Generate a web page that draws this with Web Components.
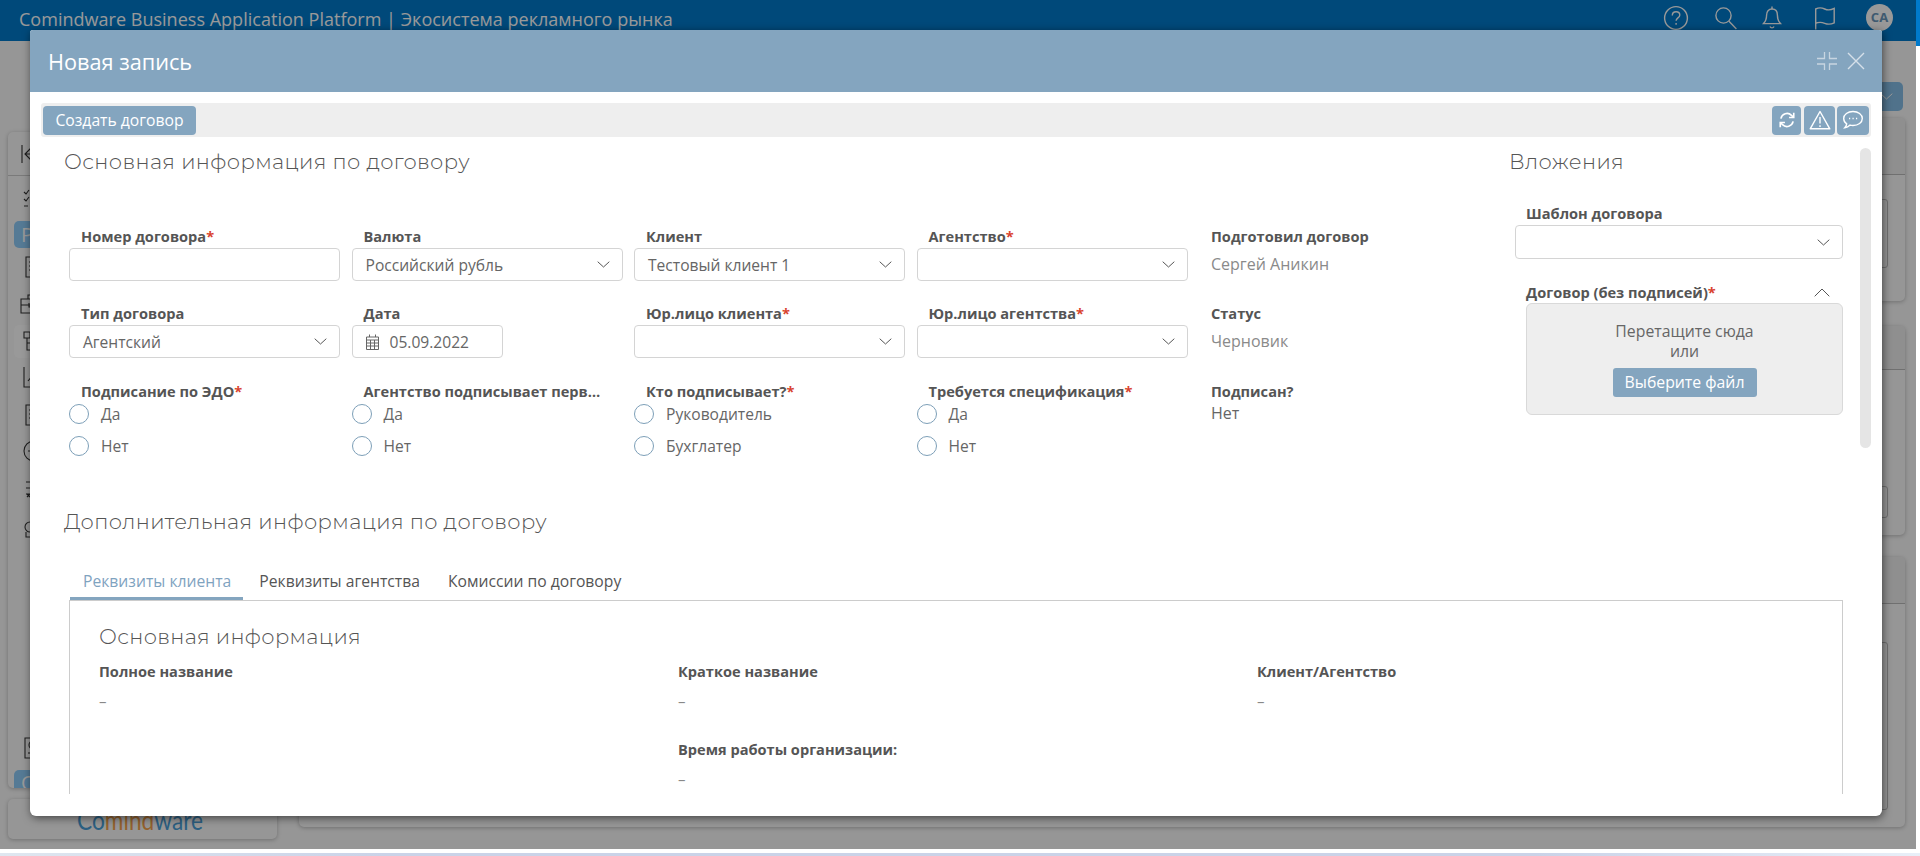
<!DOCTYPE html>
<html lang="ru"><head><meta charset="utf-8"><title>Новая запись</title>
<style>
html,body{margin:0;padding:0;height:856px;overflow:hidden;background:#fff;font-family:"Open Sans","Noto Sans",sans-serif}
</style></head>
<body>
<cmw-page></cmw-page>
<script>
const CHEV='<svg width="13" height="7" viewBox="0 0 13 7" fill="none" stroke="#555" stroke-width="1"><path d="M.7.7 6.5 6 12.3.7"/></svg>';
const ICONS={
 help:'<svg width="26" height="26" viewBox="0 0 26 26" fill="none" stroke="currentColor" stroke-width="1.4"><circle cx="13" cy="13" r="11.4"/><path d="M9.3 10.4c0-2.2 1.6-3.6 3.8-3.6s3.7 1.3 3.7 3.2c0 2.9-3.7 2.9-3.7 5.7"/><path d="M13.1 18v1.8"/></svg>',
 search:'<svg width="24" height="24" viewBox="0 0 24 24" fill="none" stroke="currentColor" stroke-width="1.4"><circle cx="9.5" cy="9.5" r="7.6"/><path d="m15 15.3 7.4 7.6"/></svg>',
 bell:'<svg width="20" height="24" viewBox="0 0 20 24" fill="none" stroke="currentColor" stroke-width="1.4"><path d="M10 3C6.5 3 4.6 5.6 4.6 9c0 4.6-1 6.4-3.1 8.6h17c-2.100-2.200-3.100-4-3.100-8.600C15.400 5.600 13.500 3 10 3Z"/><path d="M10 .6V3M8 20.500c.6 1.800 3.400 1.800 4 0"/></svg>',
 flag:'<svg width="22" height="24" viewBox="0 0 22 24" fill="none" stroke="currentColor" stroke-width="1.4"><path d="M1.700 23.500V3c3-1.500 6-1.400 9 0s6.500 1 9.500-.6v14.400c-3 1.500-6.300 1.800-9.500.5s-6.300-1.300-9.500.2"/></svg>',
 refresh:'<svg width="18" height="18" viewBox="0 0 20 20" fill="none" stroke="#fff" stroke-width="1.800"><path d="M3.200 8.400A7 7 0 0 1 15 4.800l2 2"/><path d="M17.500 2v5.200h-5.200"/><path d="M16.800 11.600A7 7 0 0 1 5 15.200l-2-2"/><path d="M2.500 18v-5.200h5.200"/></svg>',
 warn:'<svg width="22" height="20" viewBox="0 0 22 20" fill="none" stroke="#fff" stroke-width="1.400"><path d="M11 1.500 20.800 18.800H1.200Z" stroke-linejoin="round"/><path d="M11 7v6.500M11 15.300V17"/></svg>',
 chat:'<svg width="22" height="20" viewBox="0 0 22 20" fill="none" stroke="#fff" stroke-width="1.400"><path d="M11 1.500c5.200 0 9.300 3 9.300 7s-4.100 7-9.300 7c-1 0-2-.1-2.900-.4-1.300 1.300-3 2.400-5.300 2.600 1-1 1.700-2.200 1.900-3.800C2.800 12.700 1.700 10.700 1.700 8.500c0-4 4.100-7 9.300-7Z"/><path d="M7 8.500h1.200M10.500 8.500h1.200M14 8.500h1.200" stroke-width="1.600"/></svg>',
 cal:'<svg width="15" height="16" viewBox="0 0 15 16" fill="none" stroke="#666" stroke-width="1"><path d="M1.500 3h12v12.500h-12zM1.500 6h12M1.500 9h12M1.500 12h12M5.500 6v9.500M9.500 6v9.500M4.500 .5V3M10.500 .5V3"/></svg>',
 shrink:'<svg width="20" height="18" viewBox="0 0 20 18" fill="none" stroke="#c7d5e1" stroke-width="1.300"><path d="M0 6.500h7.500V0M20 6.500h-7.500V0M0 12h7.500v6M20 12h-7.500v6"/></svg>',
 close:'<svg width="18" height="18" viewBox="0 0 18 18" fill="none" stroke="#d5e0e9" stroke-width="1.400"><path d="m1 1 16 16M17 1 1 17"/></svg>',
 s1:'<svg width="20" height="20" viewBox="0 0 20 20" fill="none" stroke="#333" stroke-width="1.100"><path d="m1 3 2 2 3-4M1 10l2 2 3-4M1 17h4M9 4h10M9 11h10M9 17h10"/></svg>',
 s2:'<svg width="20" height="22" viewBox="0 0 20 22" fill="none" stroke="#333" stroke-width="1.100"><path d="M4 1h14v20H4zM7 6h8M7 10h8M7 14h8"/></svg>',
 s3:'<svg width="24" height="20" viewBox="0 0 24 20" fill="none" stroke="#333" stroke-width="1.100"><path d="M1 5h22v14H1zM8 5V1h8v4M1 11h22M9 9v4h3V9"/></svg>',
 s4:'<svg width="22" height="22" viewBox="0 0 22 22" fill="none" stroke="#333" stroke-width="1.100"><path d="M1 1h6v6H1zM4 7v12h8M4 12h8"/></svg>',
 s5:'<svg width="22" height="22" viewBox="0 0 22 22" fill="none" stroke="#333" stroke-width="1.100"><path d="M1 1v20h20M5 15l5-6 4 3 6-7"/></svg>',
 s6:'<svg width="22" height="22" viewBox="0 0 22 22" fill="none" stroke="#333" stroke-width="1.100"><circle cx="11" cy="11" r="10"/><path d="M11 5v12M5 11h12"/></svg>',
 s7:'<svg width="20" height="20" viewBox="0 0 20 20" fill="none" stroke="#333" stroke-width="1.100"><path d="M1 2h18M1 8h18M1 14h5M2 17l3-3M2 14l3 3"/></svg>',
 s8:'<svg width="22" height="22" viewBox="0 0 22 22" fill="none" stroke="#333" stroke-width="1.100"><circle cx="6" cy="11" r="5"/><circle cx="11" cy="5" r="4"/><path d="M2 16v5h6v-5"/></svg>',
 s9:'<svg width="20" height="22" viewBox="0 0 20 22" fill="none" stroke="#333" stroke-width="1.100"><path d="M1 1h18v20H1z"/><circle cx="9" cy="8" r="4"/><path d="M4 16h10"/></svg>'
};
function def(name,css,render){
 customElements.define(name,class extends HTMLElement{
  connectedCallback(){
   if(this.shadowRoot)return;
   const r=this.attachShadow({mode:'open'});
   r.innerHTML='<style>'+css+'</style>'+render(this);
  }
 });
}
const a=(e,n,d='')=>e.getAttribute(n)??d;

def('cmw-icon',':host{display:inline-flex;line-height:0}',e=>ICONS[a(e,'name')]);

def('cmw-topbar',`:host{display:flex;align-items:center;height:41px;background:#007acc;color:#fff;padding:0 0 0 19px;box-sizing:border-box;flex:none}
.t{font:18px/38px "Open Sans",sans-serif;flex:1;white-space:pre;margin-top:-3px;letter-spacing:.02px}
.r{display:flex;align-items:center;margin-top:-6px}
.av{width:27px;height:27px;border-radius:50%;background:#fff;color:#6996bb;font:700 13px/27px "Open Sans",sans-serif;text-align:center;margin-left:30px;margin-right:23px}
cmw-icon{margin-left:25px}`,
()=>`<div class="t">Comindware Business Application Platform | Экосистема рекламного рынка</div>
<div class="r"><cmw-icon name="help"></cmw-icon><cmw-icon name="search"></cmw-icon><cmw-icon name="bell" style="margin-left:24px"></cmw-icon><cmw-icon name="flag" style="margin-left:32px"></cmw-icon><div class="av">CA</div></div>`);

def('cmw-sidebar',`:host{display:flex;flex-direction:column;width:269px;margin:91px 0 0 8px;flex:none}
.card{height:656px;background:#fafafa;border-radius:5px;box-shadow:0 1px 4px rgba(0,0,0,.25);display:flex;flex-direction:column;overflow:hidden}
.h{height:44px;border-bottom:1px solid #ccc;box-sizing:border-box;flex:none;display:flex;align-items:center;padding-left:13px;color:#333}
.it{display:flex;align-items:center;padding-left:15px;flex:none}
.a{margin:0 6px;padding-left:7px;background:#8ecbf8;border-radius:5px;color:#fff;font:20px/1 "Open Sans",sans-serif}
.hv{margin:0 6px;padding-left:9px;background:#fff;border-radius:5px}
.logo{margin-top:11px;height:40px;background:#fafafa;border-radius:5px;box-shadow:0 1px 4px rgba(0,0,0,.25);text-align:center;font:27px/42px Lato,"Open Sans",sans-serif;color:#4a9fd8;overflow:hidden;padding-right:6px}
.logo span{display:inline-block;transform:scaleX(.84)}
.logo b{font-weight:400;color:#f5a24c}`,
()=>`<div class="card"><div class="h"><svg width="20" height="20" viewBox="0 0 20 20" fill="none" stroke="#333" stroke-width="1.100"><path d="M1 1v18M18 10H4M10 4l-6 6 6 6"/></svg></div>
<div class="it" style="height:45px"><cmw-icon name="s1"></cmw-icon></div>
<div class="it a" style="height:27px">Р</div>
<div class="it" style="height:38px;padding-left:14px"><cmw-icon name="s2"></cmw-icon></div>
<div class="it" style="height:36px;padding-left:12px"><cmw-icon name="s3"></cmw-icon></div>
<div class="it hv" style="height:33px;margin-top:3px"><cmw-icon name="s4"></cmw-icon></div>
<div class="it" style="height:38px"><cmw-icon name="s5"></cmw-icon></div>
<div class="it" style="height:38px;padding-left:14px"><cmw-icon name="s2"></cmw-icon></div>
<div class="it" style="height:34px"><cmw-icon name="s6"></cmw-icon></div>
<div class="it" style="height:44px;padding-left:17px"><cmw-icon name="s7"></cmw-icon></div>
<div class="it" style="height:30px;padding-left:16px"><cmw-icon name="s8"></cmw-icon></div>
<div style="flex:1"></div>
<div class="it" style="height:36px;padding-left:16px"><cmw-icon name="s9"></cmw-icon></div>
<div class="it a" style="height:30px;margin-top:4px;margin-bottom:-12px;align-items:flex-start;padding-top:3px;box-sizing:border-box">О</div></div>
<div class="logo"><span>Co<b>mind</b>ware</span></div>`);

def('cmw-bgcard',`:host{display:block;position:relative;background:#fafafa;border-radius:5px;box-shadow:0 1px 4px rgba(0,0,0,.25);box-sizing:border-box;padding-right:17px}
.h{background:#eee;border-bottom:1px solid #bbb;box-sizing:border-box;border-radius:5px 5px 0 0;margin-right:-17px}
.f{border:1px solid #bbb;border-radius:3px;margin-left:auto;width:300px;box-sizing:border-box}`,
e=>`<div class="h" style="height:${a(e,'head')}px"></div><div class="f" style="margin-top:${a(e,'gap')}px;height:${a(e,'field')}px"></div>`);

def('cmw-main',`:host{display:flex;flex-direction:column;width:1606px;margin-left:22px;flex:none}
.b{align-self:flex-end;width:34px;height:29px;margin:41px 2px 7px 0;background:#86bfe8;border-radius:5px;display:flex;align-items:center;justify-content:center}`,
()=>`<div class="b"><svg width="13" height="7" viewBox="0 0 13 7" fill="none" stroke="#fff" stroke-width="1"><path d="M.7.7 6.500 6 12.300.7"/></svg></div>
<cmw-bgcard head="57" gap="24" field="69" style="height:183px"></cmw-bgcard>
<cmw-bgcard head="44" gap="116" field="32" style="height:209px;margin-top:25px"></cmw-bgcard>
<cmw-bgcard head="47" gap="38" field="168" style="height:270px;margin-top:22px"></cmw-bgcard>`);

def('cmw-field',`:host{display:block;font:15.6px/22px "Open Sans",sans-serif;color:#666;min-width:0}
.l{font:700 14.6px/20px "Open Sans",sans-serif;color:#555;padding:0 18px 0 12px;height:22px;white-space:nowrap;overflow:hidden;text-overflow:ellipsis}
.l i{font-style:normal;color:#d9432f}
.box{height:33px;border:1px solid #d4d4d4;border-radius:4px;box-sizing:border-box;display:flex;align-items:center;padding:0 12px 0 13px;background:#fff}
.box span{flex:1;white-space:nowrap}
.date{width:151px;padding-left:12px}.date span{margin-left:10px}
.ro{height:33px;line-height:33px;padding-left:12px;color:#8a8a8a;font-size:16px}
.rg{display:flex;flex-direction:column;gap:12px;margin-top:1px}
.r{display:flex;align-items:center;height:20px}
.c{width:20px;height:20px;border:1px solid #7d9fb8;border-radius:50%;box-sizing:border-box;margin-right:12px;background:#fff}
.plain{padding-left:12px;line-height:20px;font-size:16px}`,
e=>{
 const k=a(e,'kind'),v=a(e,'value');
 const lab=`<div class="l">${a(e,'label')}${e.hasAttribute('req')?'<i>*</i>':''}</div>`;
 if(k==='select')return lab+`<div class="box"><span>${v}</span>${CHEV}</div>`;
 if(k==='input')return lab+`<div class="box"></div>`;
 if(k==='date')return lab+`<div class="box date"><cmw-icon name="cal"></cmw-icon><span>${v}</span></div>`;
 if(k==='ro')return lab+`<div class="ro">${v}</div>`;
 if(k==='plain')return lab+`<div class="plain">${v}</div>`;
 return lab+`<div class="rg">${v.split('|').map(o=>`<div class="r"><div class="c"></div>${o}</div>`).join('')}</div>`;
});

def('cmw-title',`:host{display:block;font:300 21px/30px "Montserrat",Inter,"Noto Sans",sans-serif;letter-spacing:.37px;color:#555;white-space:nowrap}`,()=>'<slot></slot>');

def('cmw-attachments',`:host{display:block;width:334px;flex:none;font:15.8px/22px "Open Sans",sans-serif;color:#555}
.l{font:700 14.6px/20px "Open Sans",sans-serif;color:#555;height:22px}.l i{font-style:normal;color:#d9432f}
.sel{margin:0 0 0 6px;height:34px;border:1px solid #d4d4d4;border-radius:4px;box-sizing:border-box;display:flex;align-items:center;justify-content:flex-end;padding-right:12px}
.l2{display:flex;justify-content:space-between;align-items:center;margin:22px 0 0 17px;padding-right:13px}
.dz{margin-left:17px;height:112px;background:#eee;border:1px solid #d9d9d9;border-radius:6px;box-sizing:border-box;text-align:center;color:#666;padding-top:17px;line-height:20px}
.btn{display:inline-block;margin-top:7px;width:144px;height:29px;line-height:28px;background:#84a5bf;color:#fff;border-radius:3px}`,
()=>`<cmw-title>Вложения</cmw-title>
<div class="l" style="margin:26px 0 0 17px">Шаблон договора</div>
<div class="sel">${CHEV}</div>
<div class="l l2"><span>Договор (без подписей)<i>*</i></span><svg width="16" height="9" viewBox="0 0 16 9" fill="none" stroke="#555" stroke-width="1"><path d="M.7 8.300 8 1l7.300 7.300"/></svg></div>
<div class="dz">Перетащите сюда<br>или<br><span class="btn">Выберите файл</span></div>`);

def('cmw-tabs',`:host{display:flex;gap:3px;height:40px;margin:23px 0 0 6px;font:15.7px/22px "Open Sans",sans-serif;color:#555}
.t{height:40px;box-sizing:border-box;padding:5px 12px 0 13px;border-bottom:3px solid transparent;display:flex;align-items:center;white-space:nowrap}
.t.on{color:#7fa3bf;border-color:#84a5bf}`,
()=>`<div class="t on">Реквизиты клиента</div><div class="t">Реквизиты агентства</div><div class="t">Комиссии по договору</div>`);

def('cmw-panel',`:host{display:block;margin-left:5px;width:1774px;height:200px;border:1px solid #ccc;border-bottom:0;box-sizing:border-box;padding:21px 0 0 29px}
.g{display:grid;grid-template-columns:repeat(3,579px);margin-top:8px;font:15px/22px "Open Sans",sans-serif;color:#888}
.c{height:78px}
.l{font:700 14.6px/22px "Open Sans",sans-serif;color:#555;height:30px}`,
()=>`<cmw-title style="letter-spacing:.33px">Основная информация</cmw-title>
<div class="g"><div class="c"><div class="l">Полное название</div>–</div><div class="c"><div class="l">Краткое название</div>–</div><div class="c"><div class="l">Клиент/Агентство</div>–</div>
<div class="c"></div><div class="c"><div class="l">Время работы организации:</div>–</div></div>`);

def('cmw-dialog',`:host{position:absolute;left:30px;top:30px;width:1852px;height:786px;background:#fff;border-radius:3px 3px 6px 6px;box-shadow:1px 2px 8px rgba(0,0,0,.55);display:flex;flex-direction:column}
.head{height:62px;background:#84a5bf;border-radius:3px 3px 0 0;display:flex;align-items:center;padding:0 17px 0 18px;color:#fff;flex:none}
.head .n{flex:1;font:21.7px/29px "Open Sans",sans-serif}
.head cmw-icon+cmw-icon{margin-left:10px}
.tb{height:34px;margin:11px 11px 0;background:#eee;border-radius:3px;display:flex;align-items:center;padding:0 2px;flex:none;box-sizing:border-box}
.b{height:29px;background:#84a5bf;color:#fff;border-radius:4px;font:15.7px/28px "Open Sans",sans-serif;display:flex;align-items:center;justify-content:center;box-sizing:border-box}
.scroll{height:657px;display:flex;overflow:hidden;flex:none}
.content{width:1830px;padding:10px 0 0 34px;box-sizing:border-box;flex:none}
.sb{width:11px;height:300px;margin-top:11px;background:#e5e5e5;border-radius:6px;flex:none}
.top{display:flex;height:360px}
.left{width:1445px;flex:none}
.grid{display:grid;grid-template-columns:repeat(5,271px);column-gap:11.5px;margin:49px 0 0 5px;grid-template-rows:55px 56px auto;row-gap:22px}`,
()=>`<div class="head"><div class="n">Новая запись</div><cmw-icon name="shrink"></cmw-icon><cmw-icon name="close"></cmw-icon></div>
<div class="tb"><div class="b" style="width:153px">Создать договор</div><div style="flex:1"></div>
<div class="b" style="width:29px"><cmw-icon name="refresh"></cmw-icon></div><div class="b" style="width:31px;margin-left:3px"><cmw-icon name="warn"></cmw-icon></div><div class="b" style="width:32px;margin-left:2px"><cmw-icon name="chat"></cmw-icon></div></div>
<div class="scroll"><div class="content"><div class="top"><div class="left"><cmw-title>Основная информация по договору</cmw-title>
<div class="grid">
<cmw-field kind="input" label="Номер договора" req></cmw-field>
<cmw-field kind="select" label="Валюта" value="Российский рубль"></cmw-field>
<cmw-field kind="select" label="Клиент" value="Тестовый клиент 1"></cmw-field>
<cmw-field kind="select" label="Агентство" req></cmw-field>
<cmw-field kind="ro" label="Подготовил договор" value="Сергей Аникин"></cmw-field>
<cmw-field kind="select" label="Тип договора" value="Агентский"></cmw-field>
<cmw-field kind="date" label="Дата" value="05.09.2022"></cmw-field>
<cmw-field kind="select" label="Юр.лицо клиента" req></cmw-field>
<cmw-field kind="select" label="Юр.лицо агентства" req></cmw-field>
<cmw-field kind="ro" label="Статус" value="Черновик"></cmw-field>
<cmw-field kind="radio" label="Подписание по ЭДО" req value="Да|Нет"></cmw-field>
<cmw-field kind="radio" label="Агентство подписывает первым" value="Да|Нет"></cmw-field>
<cmw-field kind="radio" label="Кто подписывает?" req value="Руководитель|Бухглатер"></cmw-field>
<cmw-field kind="radio" label="Требуется спецификация" req value="Да|Нет"></cmw-field>
<cmw-field kind="plain" label="Подписан?" value="Нет"></cmw-field>
</div></div><cmw-attachments></cmw-attachments></div>
<cmw-title>Дополнительная информация по договору</cmw-title>
<cmw-tabs></cmw-tabs><cmw-panel></cmw-panel></div><div class="sb"></div></div>`);

def('cmw-page',`:host{display:grid;grid-template-columns:1916px 4px;grid-template-rows:849px 4px 3px;width:1920px;height:856px}
.shell{position:relative;background:#fafafa;display:flex;flex-direction:column;overflow:hidden}
.body{display:flex;flex:1;min-height:0}
.ov{position:absolute;inset:0;background:rgba(0,0,0,.4)}
.side{background:linear-gradient(#007acc 46px,#fff 46px)}
.gap{grid-column:1/3;background:#fff}
.strip{grid-column:1/3;background:linear-gradient(90deg,#dfe7f0,#cad3e8 20%,#cad3e8 80%,#e8eff8)}`,
()=>`<div class="shell"><cmw-topbar></cmw-topbar><div class="body"><cmw-sidebar></cmw-sidebar><cmw-main></cmw-main></div><div class="ov"></div><cmw-dialog></cmw-dialog></div><div class="side"></div><div class="gap"></div><div class="strip"></div>`);
</script>
</body></html>
